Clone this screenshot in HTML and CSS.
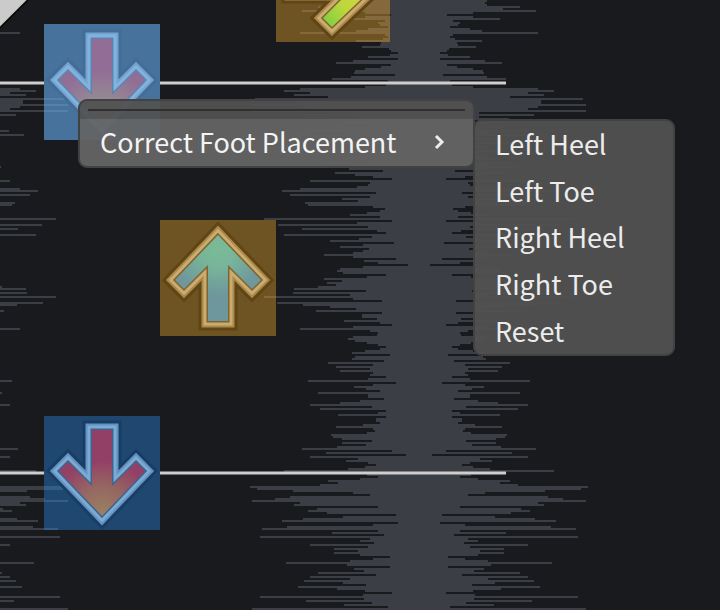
FILE: index.html
```html
<!DOCTYPE html>
<html lang="en">
<head>
<meta charset="utf-8">
<title>Chart editor</title>
<link rel="stylesheet" href="styles.css">
</head>
<body>
<main class="editor">
  <svg class="chart" viewBox="0 0 720 610" preserveAspectRatio="xMinYMin slice" aria-hidden="true">
    <defs>
      <path id="wave"/>
      <path id="arrow" d="M58 15 101 60 92 69 68 45V101H48V45L24 69 15 60Z"/>
      <radialGradient id="teal" gradientUnits="userSpaceOnUse" cx="58" cy="28" r="72">
        <stop offset="0" stop-color="#7abb96"/><stop offset=".25" stop-color="#78b59a"/><stop offset=".65" stop-color="#6f979c"/><stop offset="1" stop-color="#6d969d"/>
      </radialGradient>
      <radialGradient id="rose" gradientUnits="userSpaceOnUse" cx="58" cy="18" r="52">
        <stop offset="0" stop-color="#9a8062"/><stop offset=".5" stop-color="#956862"/><stop offset="1" stop-color="#934066"/>
      </radialGradient>
      <radialGradient id="lime" gradientUnits="userSpaceOnUse" cx="58" cy="20" r="62">
        <stop offset="0" stop-color="#e0d33e"/><stop offset=".6" stop-color="#bdd73d"/><stop offset="1" stop-color="#7ccf40"/>
      </radialGradient>
    </defs>

    <g class="wave"><use href="#wave" x="-99"/><use href="#wave" x="419"/></g>

    <path class="corner" d="M-4-4H32L-4 32Z"/>

    <g class="beam">
      <path d="M0 83H44M160 83H506M0 473H44M160 473H506"/>
    </g>

    <rect class="brown" x="276" y="-74" width="114" height="116"/>
    <g transform="translate(276 -74) rotate(90 58 58)">
      <use href="#arrow" class="shade gold-shade"/><use href="#arrow" class="ring gold"/><use href="#arrow" class="shine gold-shine"/>
      <use href="#arrow" class="edge gold-edge"/><use href="#arrow" fill="url(#lime)"/>
    </g>

    <rect class="brown" x="160" y="220" width="116" height="116"/>
    <g transform="translate(160 220)">
      <use href="#arrow" class="shade gold-shade"/><use href="#arrow" class="ring gold"/><use href="#arrow" class="shine gold-shine"/>
      <use href="#arrow" class="edge gold-edge"/><use href="#arrow" fill="url(#teal)"/>
    </g>

    <rect class="blue" x="44" y="416" width="116" height="114"/>
    <g transform="translate(44 531) scale(1 -1)">
      <use href="#arrow" class="shade blue-shade"/><use href="#arrow" class="ring sky"/><use href="#arrow" class="shine sky-shine"/>
      <use href="#arrow" class="edge blue-edge"/><use href="#arrow" fill="url(#rose)"/>
    </g>

    <rect class="blue" x="44" y="24" width="116" height="116"/>
    <g transform="translate(44 140) scale(1 -1)">
      <use href="#arrow" class="shade blue-shade"/><use href="#arrow" class="ring sky"/><use href="#arrow" class="shine sky-shine"/>
      <use href="#arrow" class="edge blue-edge"/><use href="#arrow" fill="url(#rose)"/>
    </g>
    <rect class="selected" x="44" y="24" width="116" height="116"/>
  </svg>

  <div class="menu context" role="menu">
    <hr class="rule">
    <button class="item open" type="button" role="menuitem" aria-haspopup="true" aria-expanded="true">
      <span>Correct Foot Placement</span>
      <svg class="chevron" viewBox="0 0 12 18" aria-hidden="true"><path d="M3 3 9 9 3 15"/></svg>
    </button>
  </div>

  <div class="menu submenu" role="menu">
    <button class="item" type="button" role="menuitem">Left Heel</button>
    <button class="item" type="button" role="menuitem">Left Toe</button>
    <button class="item" type="button" role="menuitem">Right Heel</button>
    <button class="item" type="button" role="menuitem">Right Toe</button>
    <button class="item" type="button" role="menuitem">Reset</button>
  </div>
</main>
<script src="wave.js"></script>
</body>
</html>
```
FILE: wave.js
```js
// Peak amplitude of each two-pixel row of the waveform, top to bottom.
const peaks = [
  68,66,68,101,84,117,54,28,54,81,34,41,39,31,51,63,119,34,31,36,63,38,39,57,30,
  28,21,29,51,21,66,83,28,38,54,64,65,24,68,87,31,30,33,54,119,135,109,125,91,164,
  122,122,167,119,109,167,60,115,60,90,40,75,50,84,60,108,70,123,50,80,44,92,56,70,38,
  88,60,46,66,76,52,94,70,100,70,36,84,64,46,27,109,49,51,62,119,137,43,129,49,77,
  61,114,111,46,34,39,52,69,39,155,27,62,141,51,117,42,33,135,47,60,89,25,56,79,50,
  56,66,95,66,23,55,41,11,56,79,82,76,33,52,95,77,92,83,101,125,53,126,69,155,66,
  37,142,116,89,63,103,37,57,57,42,75,39,27,66,119,49,41,42,66,71,64,52,41,33,39,
  54,67,29,64,67,35,91,46,83,49,79,46,49,33,51,111,23,46,65,53,39,101,51,51,35,
  59,79,109,47,99,33,41,81,33,43,43,39,56,83,46,44,52,88,86,77,47,77,53,82,117,
  27,93,13,109,61,73,51,43,54,71,135,69,52,41,59,91,81,99,169,162,126,66,49,129,144,
  167,119,125,41,102,111,92,23,76,116,137,21,46,132,157,41,87,35,159,49,59,45,109,51,85,
  61,85,59,29,46,69,133,72,29,65,55,101,43,109,69,115,76,53,121,82,54,27,56,159,55,
  113,47,75,31,167
];
document.getElementById("wave").setAttribute(
  "d",
  peaks.map((p, i) => `M${-p} ${i * 2}h${p * 2}v2h${-p * 2}z`).join("")
);
```
FILE: styles.css
```css
* { box-sizing: border-box; }

body {
  margin: 0;
  background: #191a1d;
  color: #ececec;
  font-family: "Noto Sans CJK SC", "Noto Sans", sans-serif;
}

.editor {
  position: relative;
  min-height: 100vh;
  overflow: hidden;
}

.chart {
  position: absolute;
  inset: 0;
  width: 100%;
  height: 100%;
}

.wave { fill: #3c3e45; }
.corner { fill: #cbcbcb; stroke: #0c0c0d; stroke-width: 2; }
.beam path { stroke: #cfcdcd; stroke-width: 3; }

.brown { fill: rgba(237, 171, 46, .4); }
.blue { fill: rgba(40, 141, 236, .4); }
.selected { fill: rgba(147, 195, 240, .35); }

.shade { stroke-width: 19; }
.ring { stroke-width: 13; }
.shine { stroke-width: 9; }
.edge { stroke-width: 3; }
.gold-shade { stroke: #614515; }
.gold { stroke: #a98a4d; }
.gold-shine { stroke: #ccab6e; }
.gold-edge { stroke: #7d6430; }
.blue-shade { stroke: #193e66; }
.sky { stroke: #6393c2; }
.sky-shine { stroke: #7caad2; }
.blue-edge { stroke: #3d6490; }

.menu {
  position: absolute;
  display: flex;
  flex-direction: column;
  border: 2px solid #424242;
  border-radius: 9px;
  background: rgba(82, 82, 82, .94);
  overflow: hidden;
}

.context {
  left: 78px;
  top: 99px;
  width: 397px;
}

.submenu {
  left: 473px;
  top: 119px;
  width: 202px;
  height: 237px;
}

.rule {
  width: auto;
  height: 2px;
  margin: 8px;
  border: 0;
  background: #303030;
}

.item {
  flex: 1;
  display: flex;
  align-items: center;
  justify-content: space-between;
  margin: 0;
  padding: 0 20px;
  border: 0;
  background: transparent;
  color: inherit;
  font: inherit;
  font-size: 27px;
  line-height: 46px;
  text-align: left;
}

.open {
  padding: 0 28px 1px 20px;
  background: rgba(255, 255, 255, .1);
  color: #f4f4f4;
}

.chevron {
  width: 12px;
  height: 18px;
  fill: none;
  stroke: #ececec;
  stroke-width: 3;
}
```
